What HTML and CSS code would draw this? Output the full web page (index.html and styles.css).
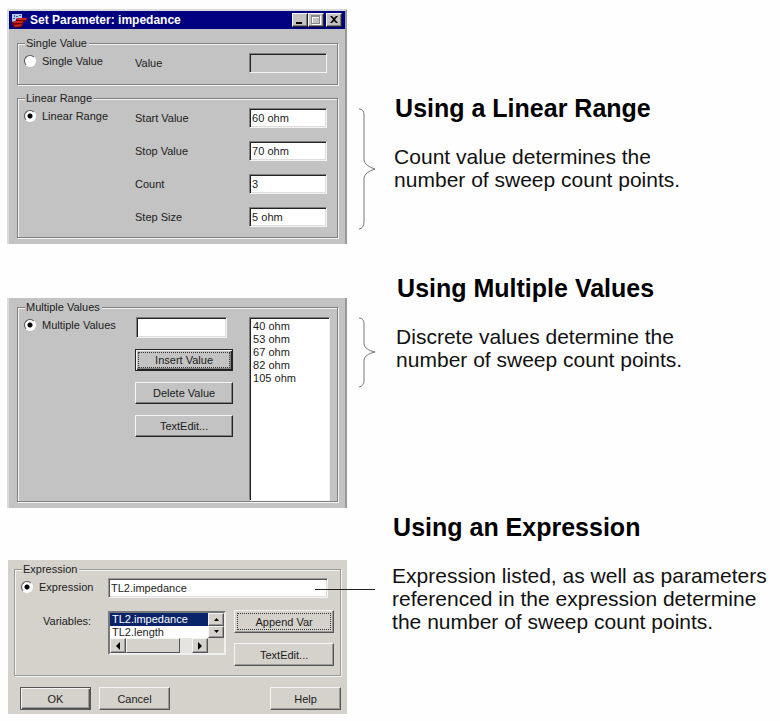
FILE: index.html
```html
<!DOCTYPE html>
<html lang="en">
<head>
<meta charset="utf-8">
<title>Set Parameter: impedance</title>
<link rel="stylesheet" href="styles.css">
</head>
<body>
<main>
  <section class="row row-linear">
    <form class="panel framed">
      <header class="titlebar">
        <svg class="app-icon" viewBox="0 0 16 15" aria-hidden="true">
          <path fill="#b8c8ee" d="M1 1h10v4H6L4 9H1z"/>
          <path fill="#4058a8" d="M3 2h1v2H3zM5 3h2v1H5zM8 2h2v1H8zM2 5h2v1H2z"/>
          <path fill="#600808" d="M1 9l4-1 1-3h10l-1 3-2 1-2 5-7 1-3-3z"/>
          <path fill="#d82020" d="M6 5h10l-1 2H6zM1 9l4-1h7l-1 2H4zM3 12l8-1-1 2-6 1z"/>
        </svg>
        <h1>Set Parameter: impedance</h1>
        <button type="button" class="win" aria-label="Minimize"><svg viewBox="0 0 12 10"><path d="M2 7h6v2H2z"/></svg></button>
        <button type="button" class="win" aria-label="Maximize"><svg viewBox="0 0 12 10"><path d="M2 1h9v9H2z" fill="#fff"/><path d="M1 0h9v9H1zM2 2v6h7V2z" fill="#888" fill-rule="evenodd"/><path d="M3 3h6v5H3z" fill="#c3c3c3"/></svg></button>
        <button type="button" class="win close" aria-label="Close"><svg viewBox="0 0 12 10"><path d="M2 1h2l2 2 2-2h2L7 4.500l3 3.500H8L6 6 4 8H2l3-3.500z"/></svg></button>
      </header>
      <div class="body">
        <fieldset>
          <legend>Single Value</legend>
          <div class="fields">
            <label class="choice"><input type="radio" name="mode"> Single Value</label>
            <label for="value">Value</label><input id="value" type="text" disabled>
          </div>
        </fieldset>
        <fieldset>
          <legend>Linear Range</legend>
          <div class="fields">
            <label class="choice"><input type="radio" name="mode" checked> Linear Range</label>
            <label for="start">Start Value</label><input id="start" type="text" value="60 ohm">
            <label for="stop">Stop Value</label><input id="stop" type="text" value="70 ohm">
            <label for="count">Count</label><input id="count" type="text" value="3">
            <label for="step">Step Size</label><input id="step" type="text" value="5 ohm">
          </div>
        </fieldset>
      </div>
    </form>
    <svg class="brace" width="18" height="122" viewBox="0 0 18 122" aria-hidden="true"><path d="M0 1Q5 1 5 7V52Q6 58 16 61Q6 64 5 70V114Q5 120 0 121"/></svg>
    <div class="note">
      <h2>Using a Linear Range</h2>
      <p>Count value determines the number of sweep count points.</p>
    </div>
  </section>

  <section class="row row-multiple">
    <form class="panel framed">
      <div class="body">
        <fieldset>
          <legend>Multiple Values</legend>
          <div class="multi">
            <label class="choice"><input type="radio" name="mode" checked> Multiple Values</label>
            <div class="stack">
              <input type="text" aria-label="New value">
              <button type="button" class="default focused">Insert Value</button>
              <button type="button">Delete Value</button>
              <button type="button">TextEdit...</button>
            </div>
            <select class="values" size="8" aria-label="Values">
              <option>40 ohm</option>
              <option>53 ohm</option>
              <option>67 ohm</option>
              <option>82 ohm</option>
              <option>105 ohm</option>
            </select>
          </div>
        </fieldset>
      </div>
    </form>
    <svg class="brace" width="18" height="72" viewBox="0 0 18 72" aria-hidden="true"><path d="M0 1Q5 1 5 7V27Q6 33 16 35Q6 37 5 43V63Q5 69 0 70"/></svg>
    <div class="note">
      <h2>Using Multiple Values</h2>
      <p>Discrete values determine the number of sweep count points.</p>
    </div>
  </section>

  <section class="row row-expression">
    <form class="panel warm">
      <fieldset>
        <legend>Expression</legend>
        <div class="expr">
          <label class="choice"><input type="radio" name="mode" checked> Expression</label>
          <input class="expr-input" type="text" value="TL2.impedance" aria-label="Expression">
          <span class="var-label" id="vars">Variables:</span>
          <div class="listbox">
            <ul role="listbox" aria-labelledby="vars">
              <li role="option" aria-selected="true">TL2.impedance</li>
              <li role="option" aria-selected="false">TL2.length</li>
            </ul>
            <div class="vscroll">
              <button type="button" aria-label="Scroll up"><svg viewBox="0 0 5 3"><path d="M0 3h5L2.500 0z"/></svg></button>
              <button type="button" aria-label="Scroll down"><svg viewBox="0 0 5 3"><path d="M0 0h5L2.500 3z"/></svg></button>
            </div>
            <div class="hscroll">
              <button type="button" aria-label="Scroll left"><svg viewBox="0 0 4 8"><path d="M4 0v8L0 4z"/></svg></button>
              <span class="thumb"></span>
              <button type="button" aria-label="Scroll right"><svg viewBox="0 0 4 8"><path d="M0 0v8l4-4z"/></svg></button>
            </div>
          </div>
          <div class="stack">
            <button type="button" class="focused">Append Var</button>
            <button type="button">TextEdit...</button>
          </div>
        </div>
      </fieldset>
      <footer class="actions">
        <button type="button" class="default">OK</button>
        <button type="button">Cancel</button>
        <button type="button" class="help">Help</button>
      </footer>
    </form>
    <div class="leader"></div>
    <div class="note">
      <h2>Using an Expression</h2>
      <p>Expression listed, as well as parameters referenced in the expression determine the number of sweep count points.</p>
    </div>
  </section>
</main>
</body>
</html>
```
FILE: styles.css
```css
* { box-sizing: border-box; }

body {
  margin: 0;
  background: #fefefe;
  color: #000;
  font-family: "Liberation Sans", Arial, sans-serif;
}

main { padding: 9px 0 0 7px; }

.row {
  display: grid;
  grid-template-columns: 44% 44px 1fr;
  align-items: start;
}
.row-multiple { margin-top: 29px; }
.row-multiple .panel { margin-top: 25px; }
.row-expression { margin-top: 4px; }
.row-expression .panel { margin-top: 48px; }

/* Notes */
.note { padding-left: 3px; }
.row-linear .note { padding-top: 84px; }
.row-multiple .note { padding-left: 5px; }
.row-expression .note { padding-left: 1px; }
.note h2 { margin: 0 0 22px; padding-left: 1px; font-size: 25px; line-height: 30px; }
.note p {
  margin: 0;
  max-width: 300px;
  font-size: 21px;
  line-height: 23px;
  color: #111;
}
.row-expression .note p { max-width: 380px; }

.brace {
  display: block;
  margin: 99px 0 0 12px;
  fill: none;
  stroke: #777;
  stroke-width: 1;
}
.row-multiple .brace { margin-top: 44px; }

.leader { position: relative; }
.leader::before {
  content: "";
  position: absolute;
  top: 77px;
  left: -32px;
  width: 60px;
  height: 1px;
  background: #222;
}

/* Panels */
.panel {
  --face: #c3c3c3;
  --shade: #808080;
  --light: #f4f4f4;
  --edge: #222;
  background: var(--face);
  font-size: 11px;
  color: #1c1c1c;
}
.framed { border-left: 2px solid #dcdcdc; border-right: 2px solid #999; }
.framed .body { padding: 2px 7px 6px 8px; }
.row-linear .panel { border-top: 2px solid #dcdcdc; }
.row-linear .body { padding-top: 7px; }
.warm {
  --face: #d5d2cc;
  --shade: #999;
  --edge: #555;
  margin-left: 1px;
  padding: 2px 6px 4px;
}

.titlebar {
  display: flex;
  align-items: center;
  height: 18px;
  padding: 0 3px 0 2px;
  background: #000080;
  color: #fff;
}
.titlebar h1 { flex: 1; margin: 0 0 0 3px; font-size: 12px; line-height: 18px; }
.app-icon { width: 16px; height: 15px; }

fieldset {
  min-width: 0;
  margin: 0;
  padding: 3px 10px 11px 6px;
  border: 1px solid var(--shade);
  box-shadow: 1px 1px 0 var(--light), inset 1px 1px 0 var(--light);
}
fieldset + fieldset { margin-top: 6px; padding-bottom: 10px; }
legend {
  margin-left: 1px;
  padding: 0 2px 0 1px;
  line-height: 14px;
  background: var(--face);
}

.fields {
  display: grid;
  grid-template-columns: 111px 1fr 78px;
  row-gap: 13px;
  line-height: 20px;
}
.fields > label:not(.choice) { grid-column: 2; }

.choice {
  display: flex;
  align-items: center;
  align-self: start;
  gap: 6px;
  height: 16px;
  line-height: 16px;
  white-space: nowrap;
}

input[type="radio"] {
  appearance: none;
  width: 12px;
  height: 12px;
  margin: 0;
  border: 1px solid;
  border-color: #555 #fff #fff #555;
  border-radius: 50%;
  background: #fff;
}
input[type="radio"]:checked { background: radial-gradient(circle, #000 2px, #fff 3px); }

input[type="text"] {
  width: 100%;
  min-width: 0;
  height: 20px;
  padding: 0 2px;
  border: 1px solid;
  border-color: var(--shade) var(--light) var(--light) var(--shade);
  border-radius: 0;
  background: #fff;
  box-shadow: inset 1px 1px 0 var(--edge), inset -1px -1px 0 #ddd;
  font: 11px "Liberation Sans", Arial, sans-serif;
  color: #1c1c1c;
}
input[type="text"]:disabled { background: var(--face); box-shadow: inset 1px 1px 0 var(--edge); }

button {
  margin: 0;
  padding: 0;
  border: 1px solid;
  border-color: var(--light) var(--edge) var(--edge) var(--light);
  border-radius: 0;
  background: var(--face);
  box-shadow: inset -1px -1px 0 var(--shade);
  font: 11px "Liberation Sans", Arial, sans-serif;
  color: #1c1c1c;
}
button.default {
  border-color: var(--edge);
  box-shadow: inset 1px 1px 0 var(--light), inset -1px -1px 0 var(--edge), inset -2px -2px 0 var(--shade);
}
.focused { outline: 1px dotted #333; outline-offset: -4px; }

.win { width: 16px; height: 14px; }
.win svg { display: block; width: 12px; height: 10px; margin: 0 auto; }
.close { margin-left: 2px; }

/* Multiple values */
.multi { display: grid; grid-template-columns: 111px 1fr 81px; }
.row-multiple fieldset { padding-right: 7px; padding-bottom: 0; }
.stack { display: grid; gap: 11px; align-content: start; }
.stack button { height: 22px; }
.multi .stack { margin-right: 16px; }
.multi .stack input { width: auto; height: 21px; margin: 0 6px 0 1px; }
.values {
  height: 184px;
  padding: 2px;
  border: 1px solid;
  border-color: var(--shade) var(--light) var(--light) var(--shade);
  border-radius: 0;
  background: #fff;
  box-shadow: inset 1px 1px 0 var(--edge);
  font: 11px "Liberation Sans", Arial, sans-serif;
  color: #1c1c1c;
  overflow: hidden;
}
.values option { height: 13px; min-height: 0; padding: 0 1px; line-height: 13px; }

/* Expression */
.warm fieldset { padding: 2px 6px 9px; }
.expr {
  display: grid;
  grid-template-columns: 87px 1fr 100px;
  row-gap: 12px;
  align-items: start;
}
.expr .choice { height: 18px; }
.expr .expr-input { grid-column: 2 / 4; width: auto; margin-right: 6px; }
.var-label { padding-left: 22px; line-height: 22px; }
.expr .stack { gap: 10px; }
.expr .stack button { height: 23px; }
.listbox {
  display: grid;
  grid-template-columns: 1fr 16px;
  margin: 1px 8px 0 0;
  border: 2px solid;
  border-color: #777 #eee #eee #777;
}
.listbox ul {
  height: 25px;
  margin: 0;
  padding: 0;
  overflow: hidden;
  list-style: none;
  background: #fff;
}
.listbox li { padding-left: 2px; line-height: 13px; }
.listbox li[aria-selected="true"] { background: #0a246a; color: #fff; }
.listbox button { display: grid; place-items: center; }
.vscroll { display: grid; }
.vscroll svg { width: 5px; height: 3px; }
.hscroll { display: flex; height: 15px; background: #e6e4e0; }
.hscroll button { width: 16px; }
.hscroll button:last-child { margin-left: auto; }
.hscroll svg { width: 4px; height: 8px; }
.thumb {
  width: 54px;
  border: 1px solid;
  border-color: var(--light) var(--edge) var(--edge) var(--light);
  background: var(--face);
}
.actions { display: flex; gap: 8px; margin-top: 11px; padding-left: 6px; }
.actions button { width: 71px; height: 23px; }
.actions .help { margin-left: auto; }
```
